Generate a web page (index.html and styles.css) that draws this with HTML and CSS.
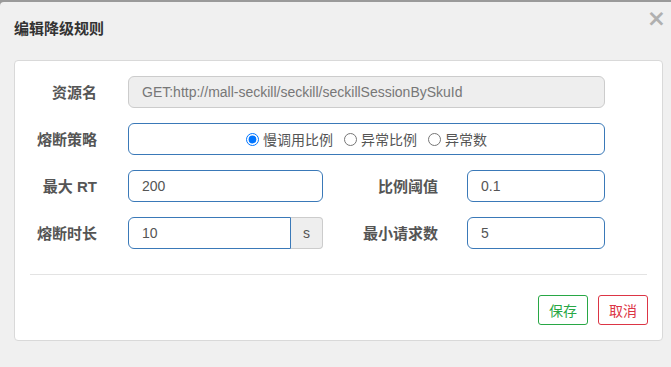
FILE: index.html
```html
<!DOCTYPE html>
<html lang="zh">
<head>
<meta charset="utf-8">
<link rel="stylesheet" href="styles.css">
</head>
<body>
<div class="modal">
  <div class="modal-header">
    <h3 class="title">编辑降级规则</h3>
    <span class="close">×</span>
  </div>
  <div class="panel">
    <div class="form">
      <label class="lbl">资源名</label>
      <div class="field full"><div class="input readonly">GET:http://mall-seckill/seckill/seckillSessionBySkuId</div></div>

      <label class="lbl">熔断策略</label>
      <div class="field full">
        <div class="input radios">
          <label class="opt"><input type="radio" name="s" checked>慢调用比例</label>
          <label class="opt"><input type="radio" name="s">异常比例</label>
          <label class="opt"><input type="radio" name="s">异常数</label>
        </div>
      </div>

      <label class="lbl">最大 RT</label>
      <div class="field"><div class="input">200</div></div>
      <label class="lbl lbl2">比例阈值</label>
      <div class="field"><div class="input">0.1</div></div>

      <label class="lbl">熔断时长</label>
      <div class="field group"><div class="input left">10</div><span class="addon">s</span></div>
      <label class="lbl lbl2">最小请求数</label>
      <div class="field"><div class="input">5</div></div>
    </div>
    <hr class="divider">
    <div class="actions">
      <button class="btn save">保存</button>
      <button class="btn cancel">取消</button>
    </div>
  </div>
</div>
</body>
</html>
```
FILE: styles.css
```css
html, body { margin: 0; padding: 0; }
body {
  background: #9a9a9a;
  width: 671px;
  height: 367px;
  overflow: hidden;
  font-family: "Liberation Sans", "Noto Sans CJK SC", sans-serif;
}
.modal {
  margin-top: 2px;
  height: 365px;
  background: #f0f0f0;
  border-radius: 4px 0 0 0;
  box-sizing: border-box;
  padding: 0 8px 0 14px;
}
.modal-header {
  position: relative;
  height: 58px;
}
.title {
  margin: 0;
  padding-top: 16px;
  font-size: 15px;
  font-weight: bold;
  color: #333;
  line-height: 21px;
}
.close {
  position: absolute;
  right: -3px;
  top: 5px;
  font-size: 23px;
  line-height: 23px;
  color: #b0b0b0;
  font-weight: bold;
  font-family: "DejaVu Sans", sans-serif;
}
.panel {
  background: #fff;
  border: 1px solid #d9d9d9;
  border-radius: 4px;
  width: 649px;
  height: 281px;
  box-sizing: border-box;
  padding-top: 15px;
}
.form {
  display: grid;
  grid-template-columns: 113px 195px 144px 138px;
  grid-auto-rows: 32px;
  row-gap: 15px;
}
.lbl {
  text-align: right;
  padding-right: 31px;
  font-size: 15px;
  font-weight: bold;
  color: #555;
  line-height: 34px;
}
.lbl2 { padding-right: 29px; }
.field.full { grid-column: 2 / span 3; }
.input {
  box-sizing: border-box;
  height: 32px;
  border: 1px solid #3a79b8;
  border-radius: 6px;
  padding: 0 13px;
  font-size: 14px;
  line-height: 31px;
  color: #555;
  background: #fff;
}
.readonly {
  background: #eee;
  border-color: #ccc;
  color: #777;
}
.radios {
  display: flex;
  justify-content: center;
  gap: 11px;
  color: #555;
}
.opt {
  display: flex;
  align-items: center;
  font-family: "Noto Sans CJK SC", sans-serif;
  font-size: 14px;
}
.opt input {
  margin: 0 4px 0 0;
  width: 13px;
  height: 13px;
}
.group { display: flex; }
.input.left {
  flex: 1;
  border-radius: 6px 0 0 6px;
}
.addon {
  width: 32px;
  box-sizing: border-box;
  border: 1px solid #ccc;
  border-left: none;
  border-radius: 0 4px 4px 0;
  background: #eee;
  color: #555;
  font-size: 14px;
  text-align: center;
  line-height: 30px;
}
.divider {
  border: none;
  border-top: 1px solid #e3e3e3;
  margin: 25px 15px 0 15px;
}
.actions {
  display: flex;
  justify-content: flex-end;
  gap: 10px;
  padding: 20px 14px 0 0;
}
.btn {
  width: 50px;
  height: 30px;
  background: #fff;
  border: 1px solid;
  border-radius: 3px;
  font-family: "Noto Sans CJK SC", sans-serif;
  font-size: 14px;
  padding: 0;
}
.save { border-color: #28a745; color: #28a745; }
.cancel { border-color: #dc3545; color: #dc3545; }
```
